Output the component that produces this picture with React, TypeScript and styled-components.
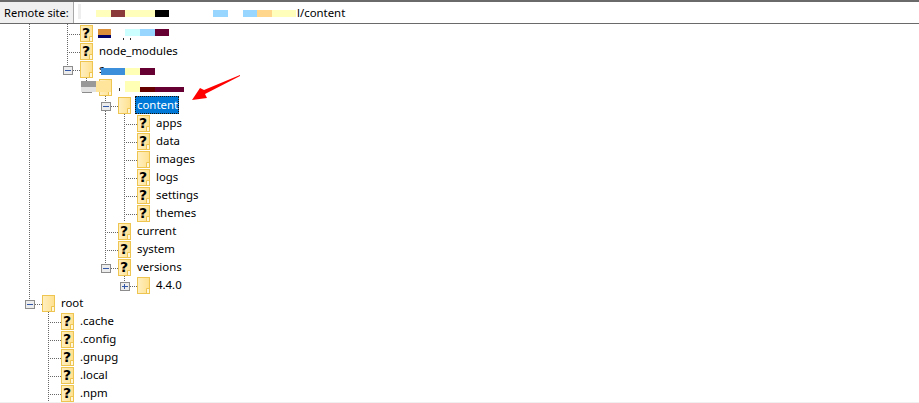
import React from 'react';
import styled, { createGlobalStyle } from 'styled-components';

const GlobalStyle = createGlobalStyle`
  html, body {
    margin: 0;
    background: #fff;
    overflow: hidden;
  }
  * {
    box-sizing: border-box;
  }
`;

const Page = styled.div`
  position: relative;
  display: flex;
  flex-direction: column;
  width: 919px;
  height: 403px;
  font-family: 'Noto Sans', 'Open Sans', sans-serif;
  font-size: 11.4px;
  color: #000;
  overflow: hidden;
`;

const AddressBar = styled.div`
  position: relative;
  display: flex;
  height: 24px;
  flex-shrink: 0;
  border-top: 2px solid #6a6a6a;
  border-bottom: 1px solid #6a6a6a;
`;

const SiteLabel = styled.div`
  width: 74px;
  padding-left: 4px;
  font-size: 11.1px;
  line-height: 21px;
  white-space: nowrap;
  background: #f0f0f0;
  border-right: 1px solid #a8a8a8;
`;

const SiteField = styled.div`
  flex: 1;
  padding-left: 223px;
  line-height: 21px;
  background: #fff;
`;

const Tree = styled.div`
  display: flex;
  flex-direction: column;
  flex: 1;
`;

const Row = styled.div`
  position: relative;
  display: flex;
  align-items: center;
  height: 18px;
  padding-left: 20px;
`;

const Label = styled.span<{ $selected?: boolean }>`
  height: 18px;
  margin-left: ${({ $selected }) => ($selected ? '4px' : '6px')};
  padding: 0 ${({ $selected }) => ($selected ? '1px 0 2px' : '0')};
  line-height: 17px;
  white-space: nowrap;
  color: ${({ $selected }) => ($selected ? '#fff' : '#000')};
  background: ${({ $selected }) => ($selected ? '#0078d7' : 'transparent')};
  outline: ${({ $selected }) => ($selected ? '1px dotted #1a1206' : 'none')};
  outline-offset: -1px;
`;

const Footer = styled.div`
  height: 1px;
  flex-shrink: 0;
  background: #f0f0f0;
`;

const Redaction = styled.i<{ $x: number; $y: number; $w: number; $h: number; $c: string }>`
  position: absolute;
  left: ${({ $x }) => $x}px;
  top: ${({ $y }) => $y}px;
  width: ${({ $w }) => $w}px;
  height: ${({ $h }) => $h}px;
  background: ${({ $c }) => $c};
`;

const ArrowMark = styled.svg`
  position: absolute;
  left: 185px;
  top: 70px;
  filter: blur(0.35px);
`;

type Column = '' | 'I' | 'T' | 'M' | 'D' | 'P';

// column codes: I line, T tee, M minus box, D minus box with line below, P plus box
const Connector = ({ type, last }: { type: Column; last: boolean }) => {
  const box = type === 'M' || type === 'D' || type === 'P';
  const width = last ? 22 : 19;
  return (
    <svg width={width} height={18} style={{ flexShrink: 0 }} shapeRendering="crispEdges">
      <g stroke="#666666" strokeDasharray="1 1">
        {(type === 'I' || type === 'T') && <line x1="9.5" y1="0" x2="9.5" y2="18" />}
        {box && <line x1="9.5" y1="0" x2="9.5" y2="6" />}
        {type === 'D' && <line x1="9.5" y1="15" x2="9.5" y2="18" />}
        {type === 'T' && <line x1="11" y1="10.5" x2="22" y2="10.5" />}
        {box && <line x1="15" y1="10.5" x2="22" y2="10.5" />}
      </g>
      {box && (
        <>
          <rect x="5.5" y="6.5" width="9" height="8" fill="#ececec" stroke="#8c8c8c" />
          <line x1="7" y1="10.5" x2="13" y2="10.5" stroke="#3458a8" />
          {type === 'P' && <line x1="9.5" y1="8" x2="9.5" y2="13" stroke="#3458a8" />}
        </>
      )}
    </svg>
  );
};

const FolderIcon = ({ unknown }: { unknown?: boolean }) => (
  <svg width={13} height={17} style={{ flexShrink: 0 }}>
    <defs>
      <linearGradient id="folderFill" x1="0" x2="1" y1="0" y2="0">
        <stop offset="0" stopColor="#fff0c2" />
        <stop offset="1" stopColor="#ffe08e" />
      </linearGradient>
    </defs>
    <rect x="0.5" y="0.5" width="12" height="16" fill="url(#folderFill)" stroke="#eec550" />
    <path d="M9.5 16V11.5H12" fill="none" stroke="#eec550" />
    <rect x="10" y="12" width="2" height="4" fill="#fff6dc" />
    {unknown && (
      <text x="6" y="13" textAnchor="middle" fontFamily="'DejaVu Sans', sans-serif" fontWeight="700" fontSize="14" fill="#000">
        ?
      </text>
    )}
  </svg>
);

interface Blot {
  x: number;
  y: number;
  w: number;
  h: number;
  c: string;
}

interface TreeRow {
  cols: Column[];
  unknown?: boolean;
  label?: string;
  selected?: boolean;
  blots?: Blot[];
}

const rows: TreeRow[] = [
  {
    cols: ['I', '', 'T'],
    unknown: true,
    blots: [
      { x: 98, y: 5, w: 13, h: 6, c: '#db9039' },
      { x: 98, y: 11, w: 13, h: 3, c: '#000066' },
      { x: 123, y: 14, w: 1, h: 2, c: '#333' },
      { x: 130, y: 14, w: 1, h: 2, c: '#333' },
      { x: 125, y: 5, w: 15, h: 7, c: '#ccffff' },
      { x: 140, y: 5, w: 15, h: 7, c: '#99d6ff' },
      { x: 155, y: 5, w: 14, h: 7, c: '#660033' },
    ],
  },
  { cols: ['I', '', 'T'], unknown: true, label: 'node_modules' },
  {
    cols: ['I', '', 'M'],
    label: 's',
    blots: [
      { x: 101, y: 8, w: 24, h: 7, c: '#3b8fdb' },
      { x: 125, y: 8, w: 15, h: 7, c: '#ffffb6' },
      { x: 140, y: 8, w: 15, h: 7, c: '#660033' },
    ],
  },
  {
    cols: ['I', '', '', 'M'],
    blots: [
      { x: 81, y: 3, w: 15, h: 6, c: '#999999' },
      { x: 81, y: 9, w: 15, h: 5, c: '#e2e2e2' },
      { x: 96, y: 3, w: 15, h: 11, c: '#ffe49c' },
      { x: 119, y: 10, w: 1, h: 3, c: '#333' },
      { x: 125, y: 3, w: 15, h: 11, c: '#ffffb6' },
      { x: 140, y: 9, w: 15, h: 5, c: '#660000' },
      { x: 155, y: 9, w: 29, h: 5, c: '#660033' },
    ],
  },
  { cols: ['I', '', '', '', 'D'], label: 'content', selected: true },
  { cols: ['I', '', '', '', 'I', 'T'], unknown: true, label: 'apps' },
  { cols: ['I', '', '', '', 'I', 'T'], unknown: true, label: 'data' },
  { cols: ['I', '', '', '', 'I', 'T'], label: 'images' },
  { cols: ['I', '', '', '', 'I', 'T'], unknown: true, label: 'logs' },
  { cols: ['I', '', '', '', 'I', 'T'], unknown: true, label: 'settings' },
  { cols: ['I', '', '', '', 'I', 'T'], unknown: true, label: 'themes' },
  { cols: ['I', '', '', '', 'T'], unknown: true, label: 'current' },
  { cols: ['I', '', '', '', 'T'], unknown: true, label: 'system' },
  { cols: ['I', '', '', '', 'M'], unknown: true, label: 'versions' },
  { cols: ['I', '', '', '', '', 'P'], label: '4.4.0' },
  { cols: ['M'], label: 'root' },
  { cols: ['', 'T'], unknown: true, label: '.cache' },
  { cols: ['', 'T'], unknown: true, label: '.config' },
  { cols: ['', 'T'], unknown: true, label: '.gnupg' },
  { cols: ['', 'T'], unknown: true, label: '.local' },
  { cols: ['', 'T'], unknown: true, label: '.npm' },
];

const barBlots: Blot[] = [
  { x: 96, y: 8, w: 15, h: 7, c: '#ffffbb' },
  { x: 111, y: 8, w: 14, h: 7, c: '#8b3a3a' },
  { x: 125, y: 8, w: 30, h: 7, c: '#ffffbb' },
  { x: 155, y: 8, w: 14, h: 7, c: '#000000' },
  { x: 213, y: 8, w: 15, h: 7, c: '#99d6ff' },
  { x: 243, y: 8, w: 14, h: 7, c: '#99d6ff' },
  { x: 257, y: 8, w: 15, h: 7, c: '#ffd68c' },
  { x: 272, y: 8, w: 24, h: 7, c: '#ffffbb' },
  { x: 78, y: 2, w: 3, h: 15, c: '#eeeeee' },
];

const renderBlots = (blots: Blot[]) =>
  blots.map(b => <Redaction key={`${b.x}-${b.y}`} $x={b.x} $y={b.y} $w={b.w} $h={b.h} $c={b.c} />);

const App: React.FunctionComponent = () => (
  <Page>
    <GlobalStyle />
    <AddressBar>
      <SiteLabel>Remote site:</SiteLabel>
      <SiteField>l/content</SiteField>
      {renderBlots(barBlots)}
    </AddressBar>
    <Tree>
      {rows.map((row, i) => (
        <Row key={i}>
          {row.cols.map((col, k) => (
            <Connector key={k} type={col} last={k === row.cols.length - 1} />
          ))}
          <FolderIcon unknown={row.unknown} />
          {row.label && <Label $selected={row.selected}>{row.label}</Label>}
          {row.blots && renderBlots(row.blots)}
        </Row>
      ))}
    </Tree>
    <Footer />
    <ArrowMark width={60} height={36}>
      <polygon points="55,5 19,20 15,18 7,30 22,28 20,24 55,6" fill="#ff0000" />
    </ArrowMark>
  </Page>
);

export default App;
